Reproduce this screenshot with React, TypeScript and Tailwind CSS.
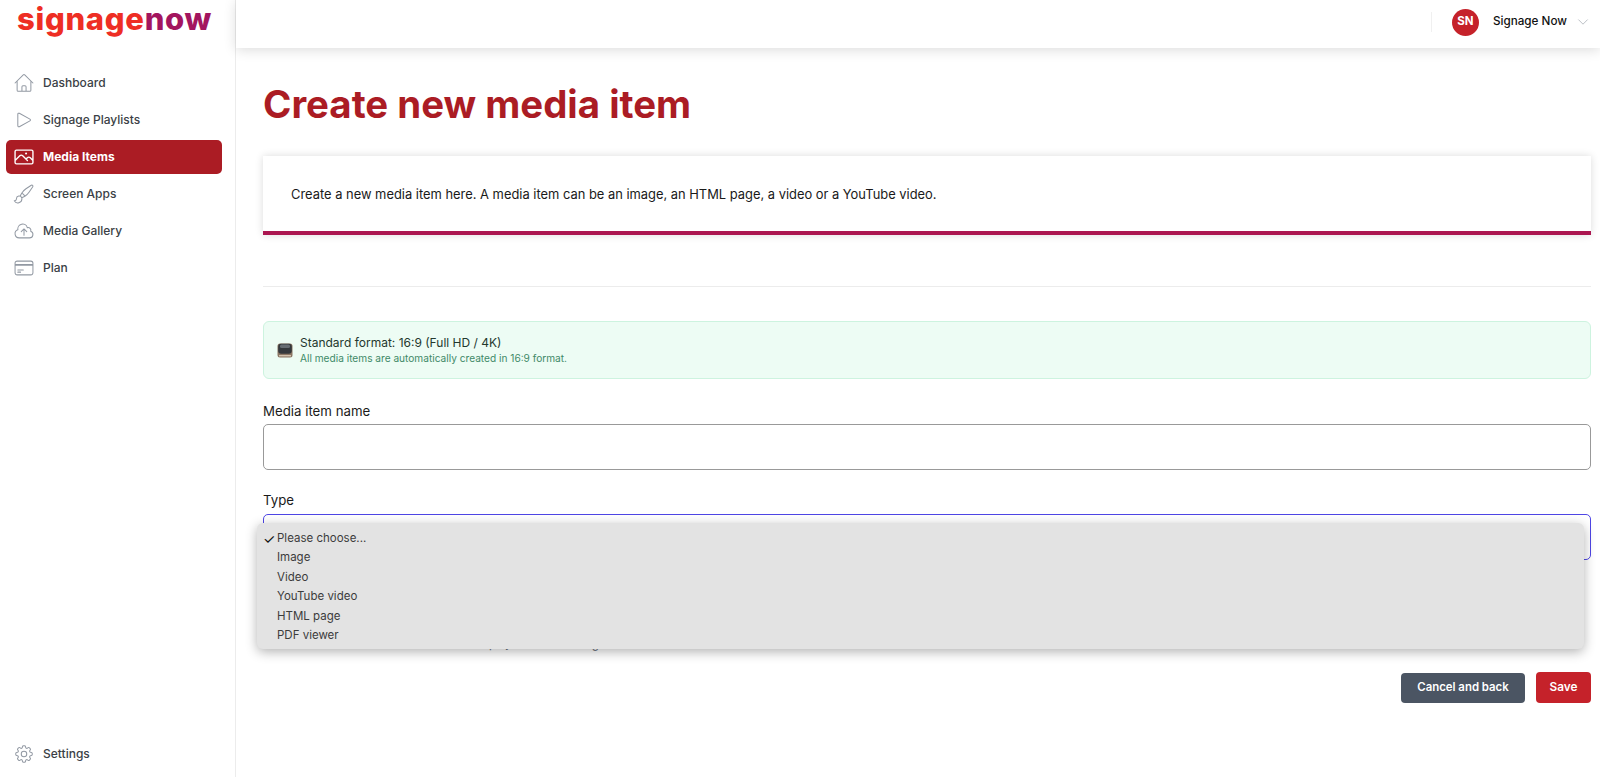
import {
  HiOutlineChevronDown,
  HiOutlineCloudArrowUp,
  HiOutlineCog8Tooth,
  HiOutlineCreditCard,
  HiOutlineHome,
  HiOutlinePaintBrush,
  HiOutlinePhoto,
  HiOutlinePlay,
} from "react-icons/hi2";

const navItems = [
  { label: "Dashboard", icon: HiOutlineHome },
  { label: "Signage Playlists", icon: HiOutlinePlay },
  { label: "Media Items", icon: HiOutlinePhoto, active: true },
  { label: "Screen Apps", icon: HiOutlinePaintBrush },
  { label: "Media Gallery", icon: HiOutlineCloudArrowUp },
  { label: "Plan", icon: HiOutlineCreditCard },
];

const options = ["Please choose...", "Image", "Video", "YouTube video", "HTML page", "PDF viewer"];

function TvIcon() {
  return (
    <svg viewBox="0 0 16 15" className="h-[15px] w-[16px] shrink-0">
      <rect x="0.5" y="0.5" width="15" height="14" rx="2.5" fill="#8a7563" />
      <rect x="1.2" y="0.8" width="13.6" height="10" rx="3" fill="#34383c" />
      <rect x="3" y="1.6" width="10" height="3.4" rx="1.5" fill="#666c72" />
      <rect x="2" y="12" width="12" height="1.4" fill="#d2c2ae" />
    </svg>
  );
}

export default function App() {
  return (
    <div className="flex h-screen overflow-hidden bg-white font-['Inter',sans-serif] text-[#111827]">
      <aside className="flex w-[236px] shrink-0 flex-col border-r border-[#ececec] bg-white pb-[6px]">
        <div className="flex h-[38px] items-center pl-[17px] text-[31px] font-extrabold leading-[38px] tracking-[0.7px]">
          <span className="text-[#ee2e24]">signage</span>
          <span className="text-[#a3155f]">now</span>
        </div>
        <nav className="mt-[28px] flex flex-col gap-[3px] px-[6px]">
          {navItems.map((item) => {
            const Icon = item.icon;
            return (
              <a
                key={item.label}
                className={
                  item.active
                    ? "flex h-[34px] w-[216px] items-center gap-[8px] rounded-[5px] bg-[#ab1c24] pl-[7px] text-[12px] font-bold text-white"
                    : "flex h-[34px] w-[216px] items-center gap-[8px] rounded-[5px] pl-[7px] text-[12px] font-medium text-[#3b3f46]"
                }
              >
                <Icon size={22} strokeWidth={item.active ? 1.5 : 1.1} className={item.active ? "text-white" : "text-[#9299a3]"} />
                {item.label}
              </a>
            );
          })}
        </nav>
        <a className="mt-auto ml-[6px] flex h-[34px] items-center gap-[8px] pl-[7px] text-[12px] font-medium text-[#3b3f46]">
          <HiOutlineCog8Tooth size={22} strokeWidth={1.1} className="text-[#9299a3]" />
          Settings
        </a>
      </aside>

      <div className="flex min-w-0 flex-1 flex-col">
        <header className="flex h-[48px] shrink-0 items-center justify-end bg-white pb-[4px] pr-[10px] shadow-[0_2px_12px_rgba(0,0,0,0.14)]">
          <div className="mr-[20px] h-[20px] w-px bg-[#f0f0f0]" />
          <div className="flex h-[27px] w-[27px] items-center justify-center rounded-full bg-[#c5222a] text-[11.5px] font-bold text-white">
            SN
          </div>
          <span className="ml-[14px] text-[11.7px] font-medium text-[#111111]">Signage Now</span>
          <HiOutlineChevronDown size={14} strokeWidth={1} className="ml-[9px] text-[#8b929c]" />
        </header>

        <main className="flex-1 pl-[27px] pr-[9px]">
          <h1 className="mt-[32px] text-[38.4px] font-bold leading-[48px] text-[#ab1c24]">Create new media item</h1>

          <section className="mt-[28px] flex h-[79px] items-center border-b-4 border-[#ab1650] bg-white pl-[28px] shadow-[0_0_8px_rgba(0,0,0,0.14)]">
            <p className="pt-[3px] text-[12.9px] text-[#1a1a1a]">
              Create a new media item here. A media item can be an image, an HTML page, a video or a YouTube video.
            </p>
          </section>

          <hr className="mt-[51px] border-[#ececec]" />

          <div className="mt-[34px] flex h-[58px] items-center gap-[7px] rounded-[6px] border border-[#cdf3df] bg-[#edfcf4] pl-[13px]">
            <TvIcon />
            <div>
              <p className="text-[12px] leading-[16px] text-[#24382e]">Standard format: 16:9 (Full HD / 4K)</p>
              <p className="text-[10.15px] leading-[14px] text-[#3f8a68]">All media items are automatically created in 16:9 format.</p>
            </div>
          </div>

          <label className="mt-[22px] block text-[13.25px] leading-[20px] text-[#1a1a1a]">Media item name</label>
          <input className="mt-[3px] block h-[46px] w-full rounded-[5px] border border-[#999999] bg-white" />

          <div className="relative">
            <label className="mt-[20px] block text-[13.25px] leading-[20px] text-[#1a1a1a]">Type</label>
            <div className="mt-[4px] h-[46px] w-full rounded-[5px] border-[1.5px] border-[#4f46e5] bg-white" />
            <p className="mt-[76px] pl-[2px] text-[11.5px] leading-[16px] text-[#6b7280]">
              Select what kind of media item will be displayed on TVs using it
            </p>
            <ul className="absolute left-[-6px] right-[7px] top-[33px] h-[126px] rounded-[6px] bg-[#e3e3e3] pl-[6px] pt-[6px] text-[11.5px] leading-[19.4px] text-[#3c3c3c] shadow-[0_3px_12px_rgba(0,0,0,0.3)]">
              {options.map((option, i) => (
                <li key={option} className="flex">
                  <span className="w-[14px] shrink-0 text-[14px] font-normal leading-[19.4px] text-[#111111]">{i === 0 ? "✓" : ""}</span>
                  {option}
                </li>
              ))}
            </ul>
          </div>

          <div className="mt-[20px] flex items-center justify-end gap-[11px]">
            <button className="h-[30px] w-[124px] rounded-[4px] bg-[#4b5563] text-[11.4px] font-semibold text-white">Cancel and back</button>
            <button className="h-[31px] w-[55px] rounded-[4px] bg-[#c5222a] text-[11.8px] font-semibold text-white">Save</button>
          </div>
        </main>
      </div>
    </div>
  );
}
